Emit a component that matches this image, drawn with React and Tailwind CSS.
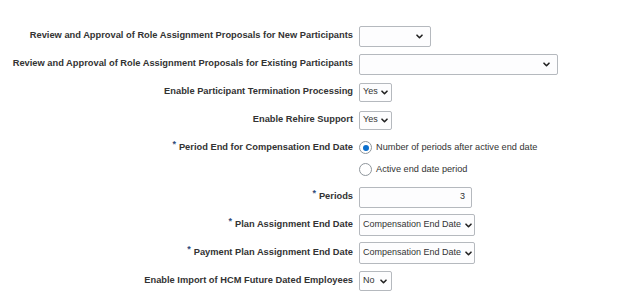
import React from "react";

const Chevron = () => (
  <svg width="7" height="5" viewBox="0 0 7 5" className="shrink-0">
    <polyline points="1,1.2 3.5,3.7 6,1.2" fill="none" stroke="#222" strokeWidth="1.6" strokeLinecap="round" strokeLinejoin="round" />
  </svg>
);

const Select = ({ w, h, value = "", chevPad = "pr-[6px]" }) => (
  <div className={`${w} ${h} flex items-center justify-between border border-[#b5b9be] rounded-[2px] bg-[#fdfdfe] pl-[3px] ${chevPad}`}>
    <span className="text-[9px] text-[#333] whitespace-nowrap">{value}</span>
    <Chevron />
  </div>
);

const Star = () => (
  <span className="text-[9px] text-[#2f4a7a] relative top-[-3px] mr-[3px]">*</span>
);

const Row = ({ label, req, children, h = "h-[28px]" }) => (
  <div className={`flex items-center ${h}`}>
    <div className="w-[353px] text-right font-bold text-[9.3px] text-[#333] whitespace-nowrap">
      {req && <Star />}
      {label}
    </div>
    <div className="ml-[6px] flex items-center">{children}</div>
  </div>
);

const Radio = ({ checked, label }) => (
  <div className="flex items-center">
    <div className="w-[13px] h-[13px] rounded-full border border-[#8f969c] bg-white flex items-center justify-center">
      {checked && <div className="w-[6px] h-[6px] rounded-full bg-[#0b6fce]" />}
    </div>
    <span className="ml-[4px] text-[9.2px] text-[#333] whitespace-nowrap">{label}</span>
  </div>
);

export default function App() {
  return (
    <div
      className="w-[624px] h-[292px] bg-white overflow-hidden pt-[22px]"
      style={{ fontFamily: '"Liberation Sans", Arial, sans-serif' }}
    >
      <Row label="Review and Approval of Role Assignment Proposals for New Participants">
        <Select w="w-[72px]" h="h-[21px]" chevPad="pr-[7px]" />
      </Row>
      <Row label="Review and Approval of Role Assignment Proposals for Existing Participants">
        <Select w="w-[199px]" h="h-[21px]" chevPad="pr-[7px]" />
      </Row>
      <Row label="Enable Participant Termination Processing">
        <Select w="w-[33px]" h="h-[19px]" value="Yes" chevPad="pr-[3px]" />
      </Row>
      <Row label="Enable Rehire Support">
        <Select w="w-[33px]" h="h-[19px]" value="Yes" chevPad="pr-[3px]" />
      </Row>
      <Row label="Period End for Compensation End Date" req>
        <Radio checked label="Number of periods after active end date" />
      </Row>
      <Row label="" h="h-[16px]">
        <Radio label="Active end date period" />
      </Row>
      <div className="mt-[5px]">
        <Row label="Periods" req>
          <div className="w-[113px] h-[21px] border border-[#b5b9be] rounded-[2px] bg-[#fdfdfe] flex items-center justify-end pr-[6px]">
            <span className="text-[9px] text-[#333]">3</span>
          </div>
        </Row>
      </div>
      <Row label="Plan Assignment End Date" req>
        <Select w="w-[116px]" h="h-[22px]" value="Compensation End Date" chevPad="pr-[2px]" />
      </Row>
      <Row label="Payment Plan Assignment End Date" req>
        <Select w="w-[116px]" h="h-[22px]" value="Compensation End Date" chevPad="pr-[2px]" />
      </Row>
      <Row label="Enable Import of HCM Future Dated Employees">
        <Select w="w-[33px]" h="h-[20px]" value="No" chevPad="pr-[4px]" />
      </Row>
    </div>
  );
}
